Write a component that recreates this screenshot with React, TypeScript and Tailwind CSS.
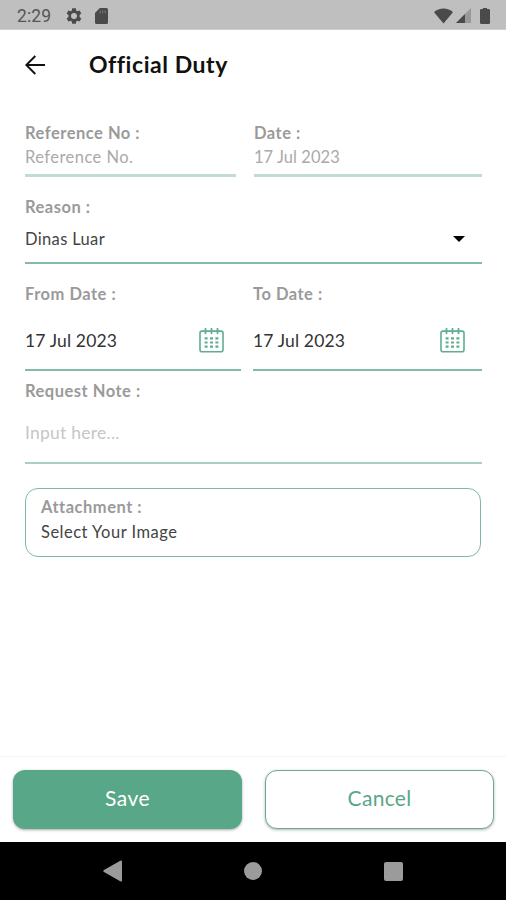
import { useState } from "react";
import type { ReactNode } from "react";

const StatusBar = () => {
  return (
    <div className="flex h-[30px] shrink-0 items-center border-b border-[#cfcfcf] bg-[#bfbfbf] pl-[17px] pr-4 pt-0.5 text-[#4a4a4a]">
      <span className="w-[48px] pt-0.5 font-[Roboto,sans-serif] text-[17.5px] leading-none tracking-[0.1px] text-[#555]">
        2:29
      </span>
      <svg className="h-[18px] w-[18px] shrink-0" viewBox="0 0 24 24" fill="currentColor">
        <path
          fillRule="evenodd"
          d="M9.6 1.8h4.8l.5 3 1.7 1 2.8-1.1 2.4 4.1-2.4 1.9v2.6l2.4 1.9-2.4 4.1-2.8-1.1-1.7 1-.5 3H9.6l-.5-3-1.7-1-2.8 1.1-2.4-4.1 2.4-1.9v-2.6L2.2 8.8l2.4-4.1 2.8 1.1 1.7-1zM12 8a4 4 0 1 0 0 8 4 4 0 0 0 0-8z"
        />
      </svg>
      <svg className="ml-[12px] h-4 w-[13px] shrink-0" viewBox="0 0 13 16">
        <path d="M4.8 0H11.4Q13 0 13 1.6V14.4Q13 16 11.4 16H1.6Q0 16 0 14.4V5z" fill="currentColor" />
        <path d="M5.2 2.4v3M7.7 2.4v3M10.2 2.4v3" stroke="#777" strokeWidth="1" />
      </svg>
      <div className="ml-auto flex items-center">
        <svg className="h-4 w-[19px]" viewBox="0 0 19 16" fill="currentColor">
          <path d="M9.5 15.5 0 4.2Q4 .6 9.5.6T19 4.2z" />
        </svg>
        <svg className="ml-[3px] h-[15px] w-[15px]" viewBox="0 0 15 15">
          <path d="M15 0v15H0z" fill="#999" />
          <path d="M9 6v9H0z" fill="currentColor" />
        </svg>
        <svg className="ml-[9px] h-4 w-2.5" viewBox="0 0 10 16" fill="currentColor">
          <path d="M3 0h4v1.1h1.8Q10 1.1 10 2.5v12Q10 16 8.8 16H1.2Q0 16 0 14.5v-12Q0 1.1 1.2 1.1H3z" />
        </svg>
      </div>
    </div>
  );
};

const CalendarIcon = () => {
  return (
    <svg className="h-[25px] w-[25px] shrink-0" viewBox="0 0 25 25" fill="none" stroke="#5fae90">
      <rect x="1" y="3.1" width="23" height="20.6" rx="2" strokeWidth="1.6" />
      <path d="M6.5.7v4.6M12.5.7v4.6M18.5.7v4.6" strokeWidth="1.8" strokeLinecap="round" />
      <path
        d="M5.6 10.4h3m2.4 0h3m2.4 0h3M5.6 14.5h3m2.4 0h3m2.4 0h3M5.6 18.6h3m2.4 0h3m2.4 0h3"
        strokeWidth="2.2"
      />
    </svg>
  );
};

const Label = ({ children }: { children: ReactNode }) => {
  return (
    <p className="h-5 whitespace-nowrap text-[16.5px] font-bold leading-[22px] tracking-[0.5px] text-[#9a9a9a]">
      {children}
    </p>
  );
};

interface DateFieldProps {
  label: string;
  value: string;
  className: string;
}

const DateField = ({ label, value, className }: DateFieldProps) => {
  return (
    <div className={`border-b-2 border-[#84bba6] ${className}`}>
      <Label>{label}</Label>
      <div className="mt-[25px] flex h-[25px] items-center justify-between pr-[17px]">
        <span className="text-[17.5px] leading-none tracking-[0.15px] text-[#333]">{value}</span>
        <CalendarIcon />
      </div>
    </div>
  );
};

export default function App() {
  const [note, setNote] = useState("");

  return (
    <div className="flex h-[900px] w-[506px] flex-col overflow-hidden bg-white font-[Lato,sans-serif]">
      <StatusBar />

      <header className="flex h-[69px] shrink-0 items-center pl-[25px]">
        <svg className="h-5 w-5" viewBox="0 0 20 20" fill="none" stroke="#111" strokeWidth="1.9">
          <path d="M20 10H1.4M10.3 1 1.3 10l9 9" />
        </svg>
        <h1 className="ml-[44px] text-[23px] font-bold leading-none tracking-[0.55px] text-[#111]">
          Official Duty
        </h1>
      </header>

      <main className="flex-1 pl-[25px] pr-6 pt-[23px]">
        <div className="flex gap-[18px]">
          <div className="h-[55px] w-[211px] border-b-[3px] border-[#c2dcd2]">
            <Label>Reference No :</Label>
            <p className="mt-[5px] text-[16.5px] leading-[21px] tracking-[0.45px] text-[#aaa]">Reference No.</p>
          </div>
          <div className="h-[55px] flex-1 border-b-[3px] border-[#c2dcd2]">
            <Label>Date :</Label>
            <p className="mt-[5px] text-[16.5px] leading-[21px] tracking-[0.05px] text-[#aaa]">17 Jul 2023</p>
          </div>
        </div>

        <div className="mt-[19px] h-[68px] border-b-2 border-[#84bba6]">
          <Label>Reason :</Label>
          <div className="mt-3 flex h-5 items-center justify-between pr-[17px]">
            <span className="pt-0.5 text-[16.5px] leading-5 tracking-[0.35px] text-[#444]">Dinas Luar</span>
            <svg className="mt-0.5 h-1.5 w-3" viewBox="0 0 12 6">
              <path d="M0 0h12L6 6z" fill="#000" />
            </svg>
          </div>
        </div>

        <div className="mt-[19px] flex gap-3">
          <DateField label="From Date :" value="17 Jul 2023" className="h-[88px] w-[216px]" />
          <DateField label="To Date :" value="17 Jul 2023" className="h-[88px] flex-1" />
        </div>

        <div className="mt-[9px] h-[84px] border-b-2 border-[#a9d0c2]">
          <Label>Request Note :</Label>
          <input
            value={note}
            onChange={(e) => setNote(e.target.value)}
            placeholder="Input here..."
            className="mt-[21px] block h-6 w-full text-[17.5px] tracking-[0.25px] text-[#333] outline-none placeholder:text-[#c6c6c6]"
          />
        </div>

        <div className="mr-px mt-[24px] h-[69px] rounded-[13px] border-[1.5px] border-[#7fb8a3] pl-[15px] pt-[7px]">
          <Label>Attachment :</Label>
          <p className="mt-[5px] text-[16.5px] leading-[22px] tracking-[0.5px] text-[#444]">Select Your Image</p>
        </div>
      </main>

      <footer className="flex h-[86px] shrink-0 gap-[23px] border-t border-[#f3f3f3] pl-[13px] pr-3 pt-[13px]">
        <button className="h-[59px] w-[229px] rounded-xl bg-[#58a788] pb-1 text-[21px] tracking-[0.5px] text-white shadow-[0_1px_3px_rgba(0,0,0,0.35)]">
          Save
        </button>
        <button className="h-[59px] flex-1 rounded-xl border-[1.5px] border-[#66ab91] bg-white pb-1 text-[21px] tracking-[0.3px] text-[#58a788] shadow-[0_1px_3px_rgba(0,0,0,0.3)]">
          Cancel
        </button>
      </footer>

      <nav className="flex h-[58px] shrink-0 items-center justify-between bg-black pl-[103px] pr-[103px]">
        <svg className="h-[22px] w-[19px]" viewBox="0 0 19 22" fill="#9b9b9b">
          <path d="M17.2.8Q19 0 19 1.8v18.4q0 1.8-1.8 1L1 12q-1.5-1 0-2z" />
        </svg>
        <span className="h-[18px] w-[18px] rounded-full bg-[#9b9b9b]" />
        <span className="h-[19px] w-[19px] rounded-xs bg-[#9b9b9b]" />
      </nav>
    </div>
  );
}
